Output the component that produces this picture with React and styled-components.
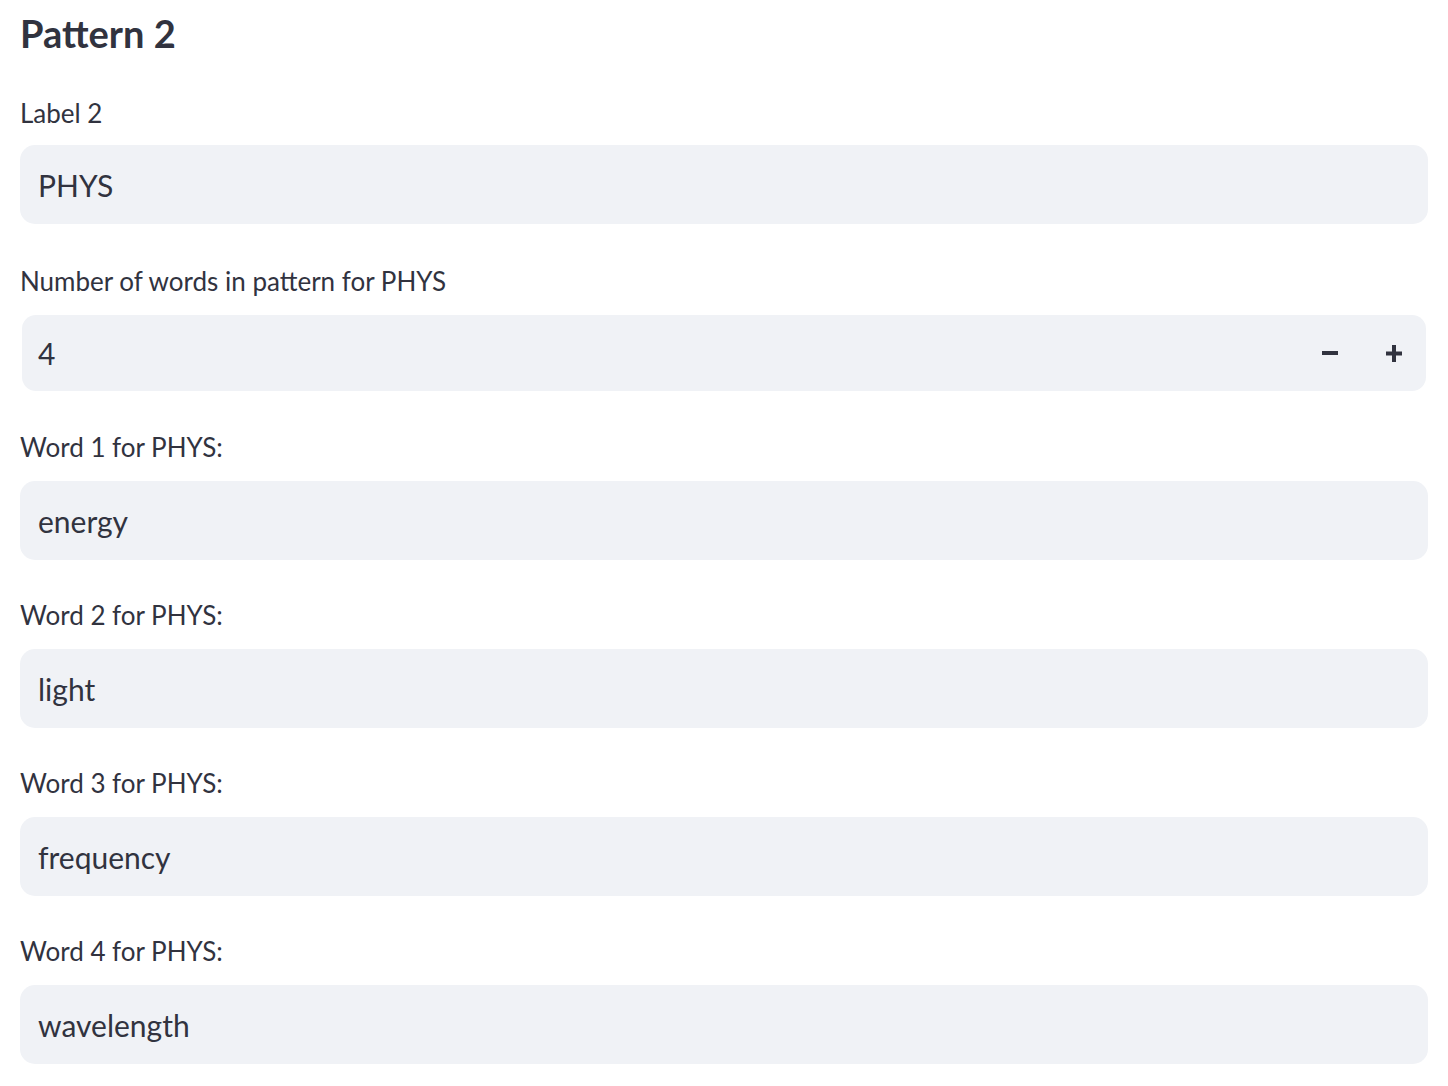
import React from 'react';
import styled, { createGlobalStyle } from 'styled-components';

const GlobalStyle = createGlobalStyle`
  body {
    margin: 0;
    background: #ffffff;
    font-family: Lato, "Noto Sans", sans-serif;
    color: #31333f;
  }
`;

const Page = styled.div`
  padding: 12px 20px 0 20px;
  display: flex;
  flex-direction: column;
`;

const Heading = styled.h3`
  margin: 0 0 43px 0;
  font-size: 38px;
  line-height: 43px;
  font-weight: 700;
  color: #31333f;
`;

const Field = styled.div`
  display: flex;
  flex-direction: column;
  margin-top: ${p => p.$space ?? 40}px;
`;

const Label = styled.label`
  font-size: 26px;
  line-height: 31px;
  margin-bottom: ${p => p.$tight ? 16 : 18}px;
  color: #31333f;
`;

const TextBox = styled.div`
  height: 79px;
  border-radius: 15px;
  background: #f0f2f6;
  display: flex;
  align-items: center;
  padding: 0 18px;
  font-size: 30px;
  color: #31333f;
`;

const NumberWrap = styled.div`
  height: 80px;
  padding: 2px;
  box-sizing: border-box;
`;

const NumberBox = styled.div`
  height: 100%;
  border-radius: 14px;
  background: #f0f2f6;
  display: flex;
  align-items: center;
  padding-left: 16px;
  font-size: 30px;
`;

const Value = styled.span`
  flex: 1;
`;

const StepButton = styled.button`
  width: 64px;
  height: 100%;
  border: none;
  background: transparent;
  padding: 0;
  display: flex;
  align-items: center;
  justify-content: center;
  cursor: pointer;
  color: #31333f;
`;

const MinusIcon = () => (
  <svg width="16" height="16" viewBox="0 0 16 16">
    <rect x="0" y="6" width="16" height="4" fill="currentColor" />
  </svg>
);

const PlusIcon = () => (
  <svg width="16" height="17" viewBox="0 0 16 17">
    <rect x="0" y="6.5" width="16" height="4" fill="currentColor" />
    <rect x="6" y="0" width="4" height="17" fill="currentColor" />
  </svg>
);

const words = ['energy', 'light', 'frequency', 'wavelength'];

export default function App() {
  return (
    <>
      <GlobalStyle />
      <Page>
        <Heading>Pattern 2</Heading>
        <Field $space={0}>
          <Label $tight>Label 2</Label>
          <TextBox>PHYS</TextBox>
        </Field>
        <Field $space={42}>
          <Label $tight>Number of words in pattern for PHYS</Label>
          <NumberWrap>
            <NumberBox>
              <Value>4</Value>
              <StepButton aria-label="decrement"><MinusIcon /></StepButton>
              <StepButton aria-label="increment"><PlusIcon /></StepButton>
            </NumberBox>
          </NumberWrap>
        </Field>
        {words.map((w, i) => (
          <Field key={w} $space={i === 0 ? 39 : 40}>
            <Label>Word {i + 1} for PHYS:</Label>
            <TextBox>{w}</TextBox>
          </Field>
        ))}
      </Page>
    </>
  );
}
